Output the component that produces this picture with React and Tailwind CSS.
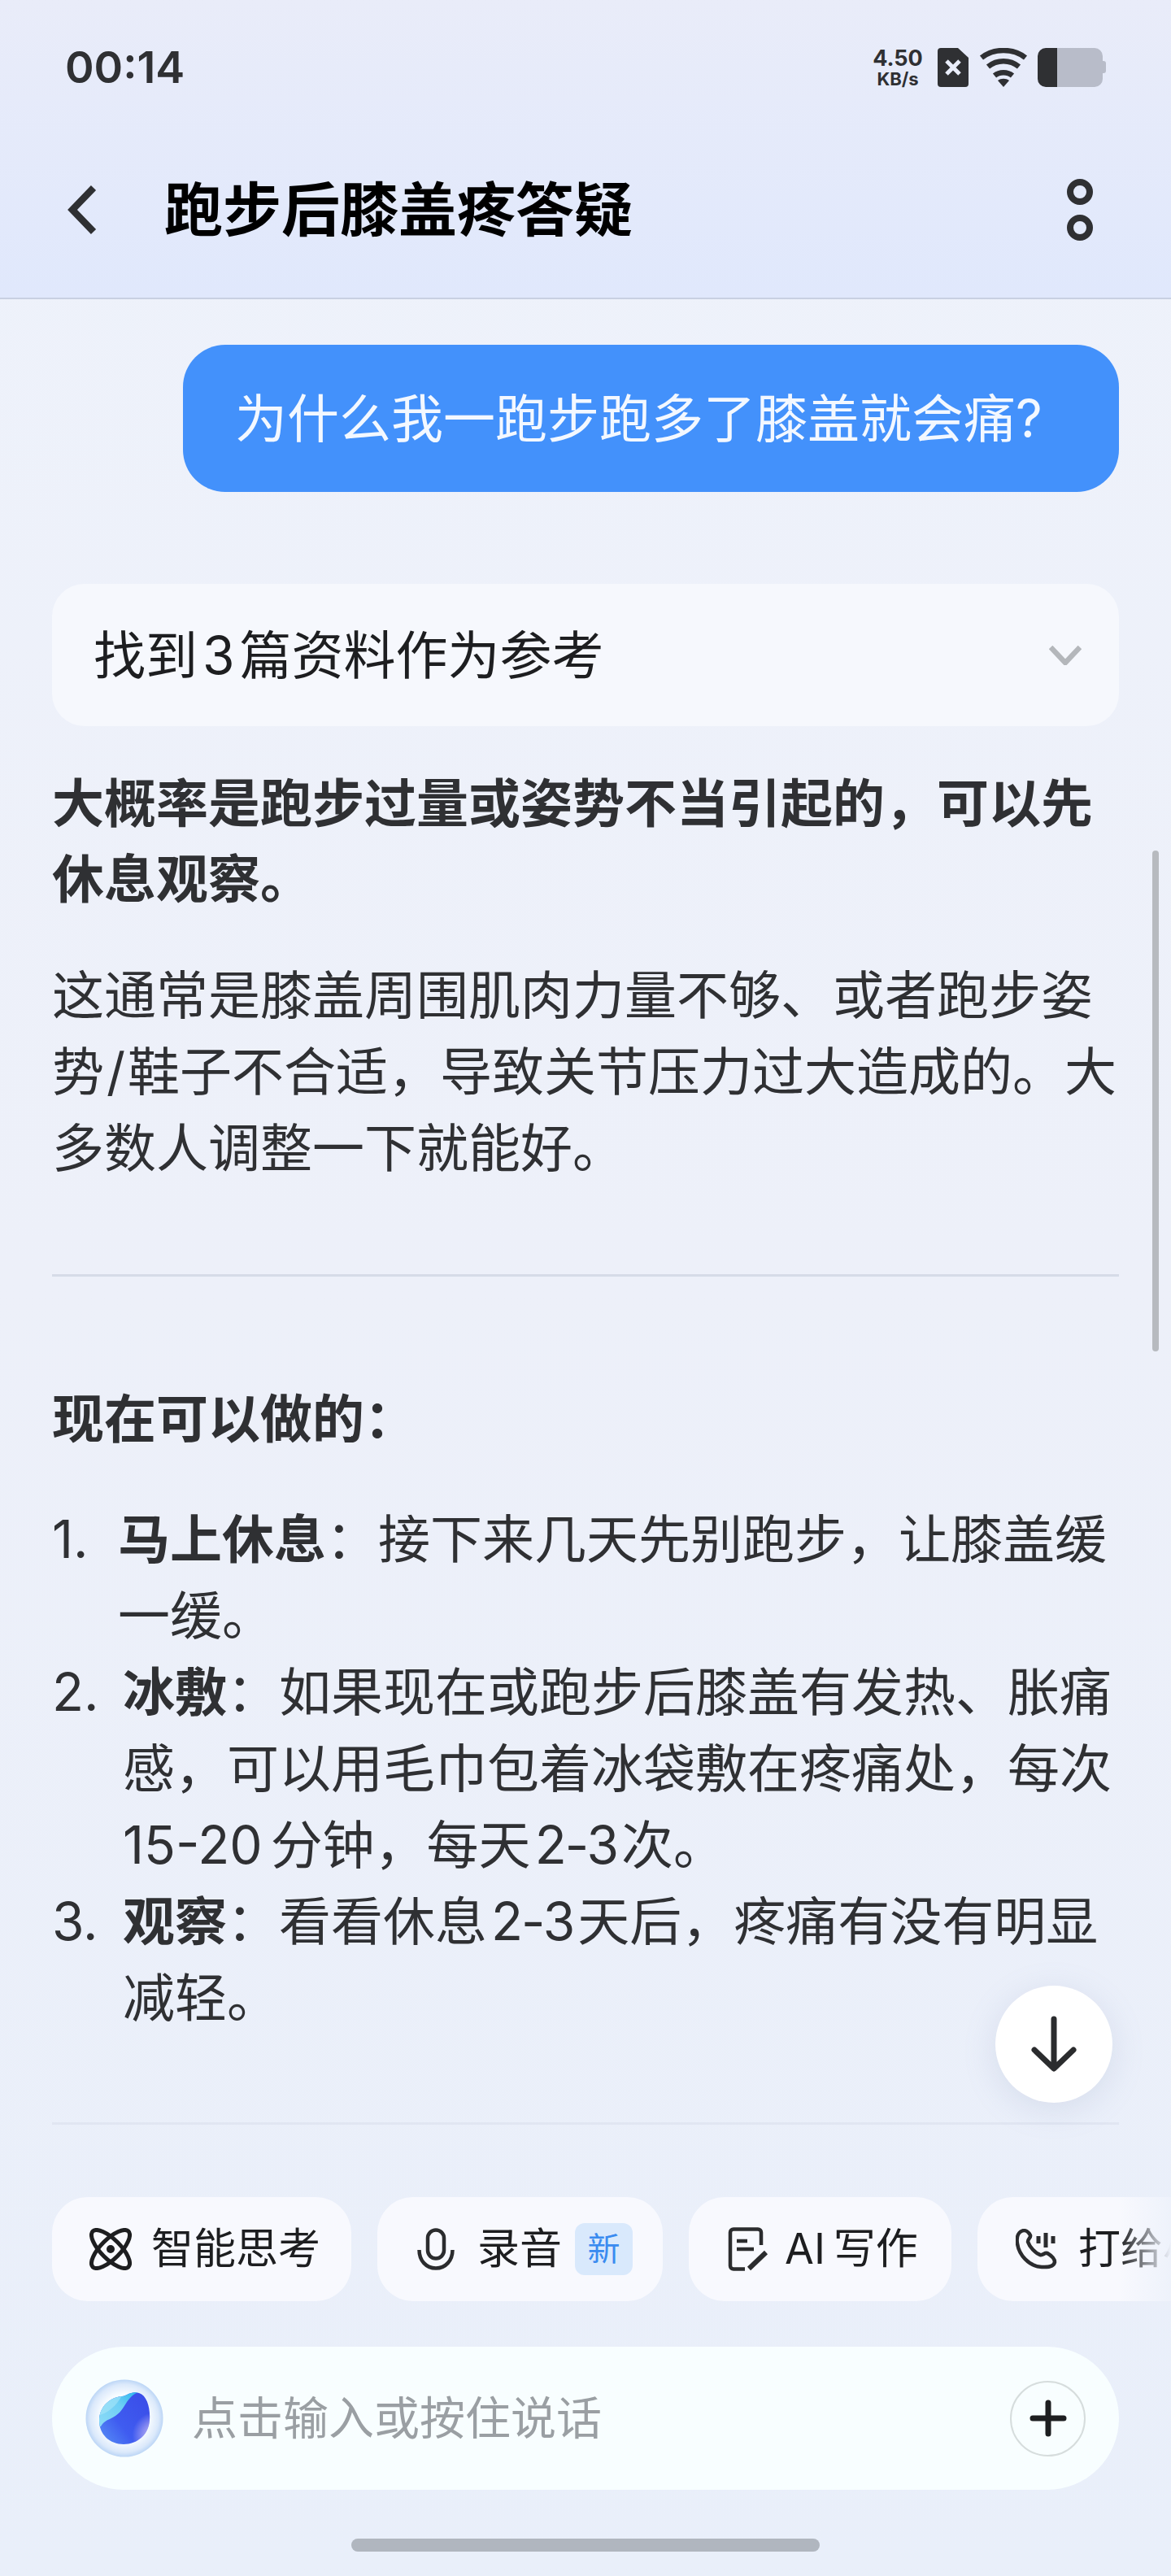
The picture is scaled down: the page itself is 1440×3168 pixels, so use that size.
import React from 'react';

const FONT = "font-['Inter','Noto_Sans_CJK_SC',sans-serif]";

const StatusIcons = () => (
  <div className="flex items-center">
    <div className="flex w-[64px] flex-col items-center font-bold text-[#2f3033]">
      <span className="text-[27px] leading-[28px]">4.50</span>
      <span className="text-[22px] leading-[22px]">KB/s</span>
    </div>
    {/* sim */}
    <svg className="ml-[17px] shrink-0" width="38" height="48" viewBox="0 0 38 48">
      <path d="M4 0H25L38 12V44a4 4 0 0 1-4 4H4a4 4 0 0 1-4-4V4a4 4 0 0 1 4-4Z" fill="#2f3033" />
      <path d="M11 16L27 32M27 16L11 32" stroke="#eaeefb" strokeWidth="5" />
    </svg>
    {/* wifi */}
    <svg className="ml-[13px] shrink-0" width="60" height="48" viewBox="0 0 60 48">
      <path d="M3 12C18 0 42 0 57 12" stroke="#2f3033" strokeWidth="6.5" fill="none" />
      <path d="M11 23C22 14 38 14 49 23" stroke="#2f3033" strokeWidth="6.5" fill="none" />
      <path d="M19 34C25 29 35 29 41 34" stroke="#2f3033" strokeWidth="6.5" fill="none" />
      <path d="M23 40C27 37 33 37 37 40L30 48Z" fill="#2f3033" />
    </svg>
    {/* battery */}
    <svg className="ml-[12px] shrink-0" width="84" height="48" viewBox="0 0 84 48">
      <path d="M10 0H70a10 10 0 0 1 10 10V38a10 10 0 0 1-10 10H10Z" fill="#b8bcc9" />
      <path d="M80 16h1a3 3 0 0 1 3 3V28a3 3 0 0 1-3 3h-1Z" fill="#b8bcc9" />
      <path d="M24 0H10A10 10 0 0 0 0 10V38A10 10 0 0 0 10 48H24Z" fill="#2f3033" />
    </svg>
  </div>
);

const Chip = ({ icon, label, badge, className, gap }) => (
  <div className={`flex h-[128px] shrink-0 items-center rounded-[44px] bg-[#f8f9fe] ${className}`}>
    {icon}
    <span className={`whitespace-nowrap text-[52px] leading-none text-[#1d1e20] ${gap}`}>{label}</span>
    {badge && (
      <span className="ml-[16px] flex h-[64px] w-[71px] items-center justify-center rounded-[12px] bg-[#d9e9fc] text-[40px] text-[#3a8bf0]">
        {badge}
      </span>
    )}
  </div>
);

const OrbitIcon = () => (
  <svg className="shrink-0" width="52" height="52" viewBox="0 0 52 52" fill="none" stroke="#1d1e20" strokeWidth="5">
    <ellipse cx="26" cy="26" rx="12" ry="31" transform="rotate(-45 26 26)" />
    <ellipse cx="26" cy="26" rx="12" ry="31" transform="rotate(45 26 26)" />
    <circle cx="26" cy="26" r="5" fill="#1d1e20" stroke="none" />
  </svg>
);

const MicIcon = () => (
  <svg className="shrink-0" width="46" height="52" viewBox="0 0 46 52" fill="none" stroke="#2b2c2e" strokeWidth="4.5">
    <rect x="13" y="2.5" width="20" height="35" rx="10" />
    <path d="M2.5 27C2.5 40 11 49.5 23 49.5S43.5 40 43.5 27" />
  </svg>
);

const WriteIcon = () => (
  <svg className="shrink-0" width="50" height="54" viewBox="0 0 50 54" fill="none" stroke="#2b2c2e" strokeWidth="4.5">
    <path d="M21 51.5H7a4 4 0 0 1-4-4V6.5a4 4 0 0 1 4-4H37a4 4 0 0 1 4 4V22" />
    <path d="M11 17H24M11 27H32" />
    <path d="M26 51L47 31" strokeWidth="6" />
  </svg>
);

const PhoneIcon = () => (
  <svg className="shrink-0" width="52" height="50" viewBox="0 0 52 50" fill="none" stroke="#2b2c2e" strokeWidth="4.5">
    <path d="M8 2.5C2 5 1 12 2 18C4 32 16 46 32 47C40 47.5 47 46 48 41C48 37 44 33 39 30C35 29 34 33 30 32C24 30 17 22 15 16C15 12 19 11 18 8C16 4 12 1 8 2.5Z" />
    <path d="M28 9V18M37 5V23M46 9V18" strokeWidth="5" />
  </svg>
);

const BackIcon = () => (
  <svg className="shrink-0" width="38" height="60" viewBox="0 0 38 60" fill="none" stroke="#2f3033" strokeWidth="8.5">
    <path d="M33 3L7 30L33 57" />
  </svg>
);

const Logo = () => (
  <svg className="shrink-0" width="96" height="96" viewBox="0 0 96 96">
    <defs>
      <radialGradient id="halo" cx="50%" cy="50%" r="50%">
        <stop offset="62%" stopColor="#f8fcff" />
        <stop offset="88%" stopColor="#dbe9fb" />
        <stop offset="100%" stopColor="#bcd6f6" />
      </radialGradient>
      <linearGradient id="core" x1="0.15" y1="0.85" x2="0.85" y2="0.3">
        <stop offset="0%" stopColor="#5b97f6" />
        <stop offset="45%" stopColor="#3f5cf0" />
        <stop offset="100%" stopColor="#3a4de8" />
      </linearGradient>
      <radialGradient id="lilac" cx="90%" cy="72%" r="30%">
        <stop offset="0%" stopColor="#e3cdf6" />
        <stop offset="100%" stopColor="#e3cdf6" stopOpacity="0" />
      </radialGradient>
      <linearGradient id="wave" x1="0" y1="0.9" x2="1" y2="0.1">
        <stop offset="0%" stopColor="#8fdcf7" />
        <stop offset="55%" stopColor="#6fcff5" />
        <stop offset="100%" stopColor="#1fb2ec" />
      </linearGradient>
      <clipPath id="blob">
        <path d="M17 51C17 34 30 22 45 21C52 20 56 14 66 17C76 20 80 36 79 50C78 68 64 80 47 80C30 80 17 68 17 51Z" />
      </clipPath>
    </defs>
    <circle cx="48" cy="48" r="47.5" fill="url(#halo)" />
    <g clipPath="url(#blob)">
      <rect width="96" height="96" fill="url(#core)" />
      <rect width="96" height="96" fill="url(#lilac)" />
      <path d="M10 10H70V17C62 15 58 19 51 28C45 38 41 44 30 49C25 51 22 53 19 58L10 60Z" fill="url(#wave)" />
      <path d="M10 46C22 44 36 38 46 18L30 14L10 24Z" fill="#a9e6f9" opacity="0.6" />
    </g>
  </svg>
);

// digits sit a little apart from the Chinese text
const N = ({ children }) => <span className="mx-[5px] tracking-[-2px]">{children}</span>;

const ListItem = ({ num, lead, numWidth, children }) => (
  <li className="flex">
    <span className={`shrink-0 whitespace-nowrap ${numWidth}`}>{num}.</span>
    <p>
      <b className="font-bold">{lead}</b>
      {children}
    </p>
  </li>
);

const App = () => {
  return (
    <div
      lang="zh-CN"
      className={`relative h-[3168px] w-[1440px] overflow-hidden bg-gradient-to-b from-[#eef2fb] via-[#edf0f9] to-[#e9effa] ${FONT}`}
    >
      {/* Header */}
      <header className="h-[368px] border-b-2 border-[#c8d0e2] bg-gradient-to-b from-[#e9ecf9] to-[#e0e8fc]">
        <div className="flex h-[164px] items-center justify-between px-[80px] pt-[2px]">
          <span className="text-[54px] font-semibold leading-none text-[#2f3033]">00:14</span>
          <StatusIcons />
        </div>
        <div className="flex h-[188px] items-center pl-[82px] pr-[96px]">
          <BackIcon />
          <h1 className="ml-[82px] text-[72px] font-bold leading-none text-black">跑步后膝盖疼答疑</h1>
          <div className="ml-auto flex flex-col gap-[12px]">
            <span className="h-[32px] w-[32px] rounded-full border-[8px] border-[#2f3033]" />
            <span className="h-[32px] w-[32px] rounded-full border-[8px] border-[#2f3033]" />
          </div>
        </div>
      </header>

      {/* Conversation */}
      <main className="px-[64px]">
        <div className="mt-[56px] ml-auto flex h-[181px] w-[1151px] items-center rounded-[52px] bg-[#4391fb] pl-[64px] text-[64px] text-[#f3f8ff]">
          为什么我一跑步跑多了膝盖就会痛?
        </div>

        <div className="mt-[113px] flex h-[175px] items-center justify-between rounded-[40px] bg-[#f6f8fd] pl-[51px] pr-[46px]">
          <span className="text-[64px] leading-none text-[#1d1e20]">
            找到<span className="mx-[6px]">3</span>篇资料作为参考
          </span>
          <svg className="shrink-0" width="40" height="24" viewBox="0 0 40 24" fill="none" stroke="#b4b7bb" strokeWidth="6.5">
            <path d="M2 2L20 21L38 2" />
          </svg>
        </div>

        <p className="mt-[48px] text-[64px] font-bold leading-[93px] text-[#2f3033]">
          大概率是跑步过量或姿势不当引起的，可以先休息观察。
        </p>

        <p className="mt-[50px] text-[64px] leading-[94px] text-[#2f3033]">
          这通常是膝盖周围肌肉力量不够、或者跑步姿势<span className="mx-[3px]">/</span>鞋子不合适，导致关节压力过大造成的。大多数人调整一下就能好。
        </p>

        <hr className="mt-[108px] border-t-[3px] border-[#d6dbe7]" />

        <h2 className="mt-[128px] text-[64px] font-bold leading-[94px] text-[#2f3033]">现在可以做的：</h2>

        <ol className="mt-[54px] text-[64px] leading-[94px] text-[#2f3033]">
          <ListItem num="1" numWidth="w-[81px]" lead="马上休息">：接下来几天先别跑步，让膝盖缓一缓。</ListItem>
          <ListItem num="2" numWidth="w-[87px]" lead="冰敷">：如果现在或跑步后膝盖有发热、胀痛感，可以用毛巾包着冰袋敷在疼痛处，每次15-20<span className="ml-[10px]">分钟</span>，每天<N>2-3</N>次。</ListItem>
          <ListItem num="3" numWidth="w-[87px]" lead="观察">：看看休息<N>2-3</N>天后，疼痛有没有明显减轻。</ListItem>
        </ol>

        <hr className="mt-[106px] border-t-[3px] border-[#e1e6f2]" />
      </main>

      {/* Chips */}
      <div className="relative mt-[89px] flex gap-[32px] overflow-hidden pl-[64px]">
        <Chip className="w-[368px] pl-[46px]" gap="ml-[24px]" icon={<OrbitIcon />} label="智能思考" />
        <Chip className="w-[351px] pl-[49px]" gap="ml-[28px]" icon={<MicIcon />} label="录音" badge="新" />
        <Chip className="w-[323px] pl-[48px]" gap="ml-[20px]" icon={<WriteIcon />} label={<>AI<span className="ml-[10px]">写作</span></>} />
        <Chip className="w-[300px] pl-[47px]" gap="ml-[25px]" icon={<PhoneIcon />} label="打给小布" />
        <div className="absolute inset-y-0 right-0 w-[64px] bg-gradient-to-r from-transparent to-[#eef2fb]" />
      </div>

      {/* Input */}
      <div className="mx-[64px] mt-[56px] flex h-[176px] items-center rounded-[88px] bg-[#f8feff] px-[41px]">
        <Logo />
        <span className="ml-[35px] text-[56px] leading-none text-[#9a9fa3]">点击输入或按住说话</span>
        <span className="ml-auto flex h-[93px] w-[93px] items-center justify-center rounded-full border-2 border-[#d6dddd]">
          <svg width="46" height="46" viewBox="0 0 46 46" stroke="#1d1e20" strokeWidth="7" strokeLinecap="round">
            <path d="M23 4V42M4 23H42" />
          </svg>
        </span>
      </div>

      {/* Home bar */}
      <div className="mx-auto mt-[60px] h-[16px] w-[576px] rounded-full bg-[#b0b6bf]" />

      {/* Scrollbar */}
      <div className="absolute left-[1417px] top-[1046px] h-[616px] w-[8px] rounded-full bg-[#b7babf]" />

      {/* Scroll to bottom */}
      <button className="absolute left-[1224px] top-[2442px] flex h-[144px] w-[144px] items-center justify-center rounded-full bg-white shadow-[0_8px_40px_rgba(120,140,180,0.18)]">
        <svg width="56" height="70" viewBox="0 0 56 70" fill="none" stroke="#2b2c2e" strokeWidth="7" strokeLinecap="round" strokeLinejoin="round">
          <path d="M28 4V64M4 42L28 65L52 42" />
        </svg>
      </button>
    </div>
  );
};

export default App;
